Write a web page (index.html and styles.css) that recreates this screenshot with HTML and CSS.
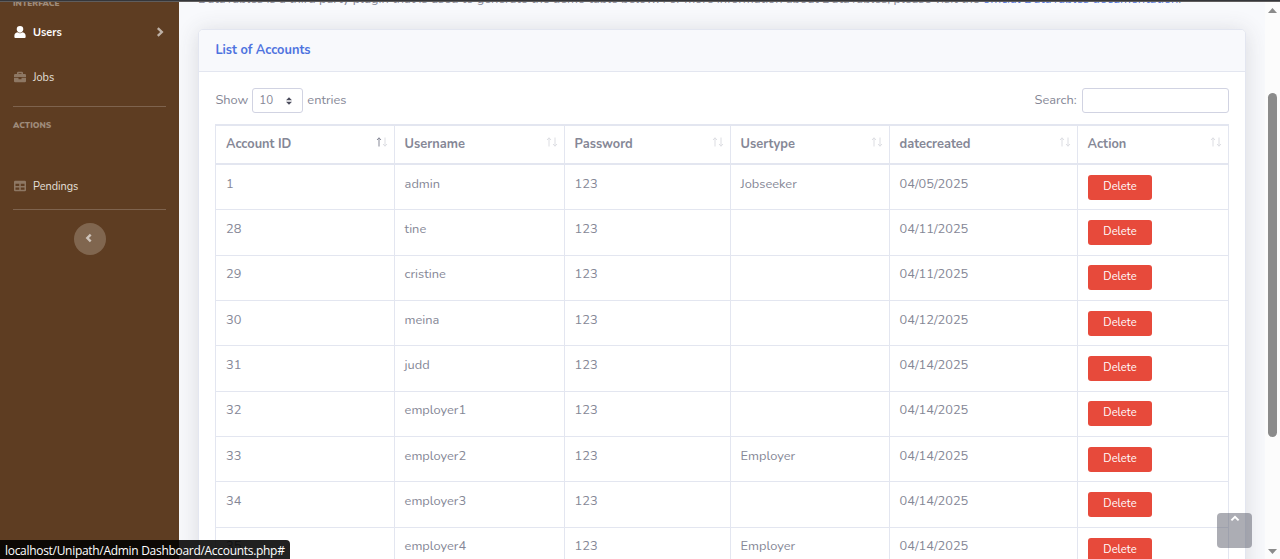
FILE: index.html
```html
<!DOCTYPE html>
<html lang="en">
<head>
<meta charset="utf-8">
<title>Accounts</title>
<link rel="stylesheet" href="styles.css">
</head>
<body>
<div class="window">
  <nav class="sidebar">
    <div class="heading heading-first">Interface</div>
    <a class="nav-item active">
      <svg class="icon" viewBox="0 0 512 512"><path d="M256 0a140 140 0 0 1 140 140c0 60-60 150-140 150S116 200 116 140A140 140 0 0 1 256 0zM150 270c60 55 152 55 212 0 90 10 134 70 134 160v40q0 42-42 42H58q-42 0-42-42v-40c0-90 44-150 134-160z"/></svg>
      <span>Users</span>
      <svg class="chevron" viewBox="0 0 8 10"><path d="M1.8 1.2L5.8 5L1.8 8.8"/></svg>
    </a>
    <a class="nav-item jobs">
      <svg class="icon" viewBox="0 0 512 512"><path d="M320 336q0 16-16 16h-96q-16 0-16-16v-48H0v144q0 48 48 48h416q48 0 48-48V288H320zM464 128h-80V80q0-48-48-48H176q-48 0-48 48v48H48q-48 0-48 48v80h512v-80q0-48-48-48zm-144 0H192V96h128z"/></svg>
      <span>Jobs</span>
    </a>
    <hr class="divider">
    <div class="heading">Actions</div>
    <a class="nav-item pendings">
      <svg class="icon" viewBox="0 0 512 512"><path fill-rule="evenodd" d="M464 32H48Q0 32 0 80v352q0 48 48 48h416q48 0 48-48V80q0-48-48-48zM224 416H64v-96h160zm0-160H64v-96h160zm224 160H288v-96h160zm0-160H288v-96h160z"/></svg>
      <span>Pendings</span>
    </a>
    <hr class="divider last">
    <button class="toggle"><svg viewBox="0 0 8 10"><path d="M5.7 1.6L2.3 5L5.7 8.4"/></svg></button>
  </nav>

  <main class="content">
    <p class="intro">DataTables is a third party plugin that is used to generate the demo table below. For more information about DataTables, please visit the <a>official DataTables documentation</a>.</p>
    <section class="card">
      <h6 class="card-title"><span>List of Accounts</span></h6>
      <div class="card-body">
        <div class="controls">
          <label class="length"><span>Show</span>
            <span class="select"><span>10</span><svg viewBox="0 0 4 5"><path d="M2 0L0 2h4zM2 5L0 3h4z"/></svg></span>
            <span>entries</span></label>
          <label class="search"><span>Search:</span><input type="text"></label>
        </div>
        <div class="table">
          <div class="row head">
            <div><span>Account ID</span><i class="sort asc"><svg viewBox="0 0 12 10"><path d="M3 9.5V.8M1 3L3 .8L5 3"/><path d="M9 .5v8.7M7 7l2 2.2L11 7"/></svg></i></div>
            <div><span>Username</span><i class="sort"><svg viewBox="0 0 12 10"><path d="M3 9.5V.8M1 3L3 .8L5 3"/><path d="M9 .5v8.7M7 7l2 2.2L11 7"/></svg></i></div>
            <div><span>Password</span><i class="sort"><svg viewBox="0 0 12 10"><path d="M3 9.5V.8M1 3L3 .8L5 3"/><path d="M9 .5v8.7M7 7l2 2.2L11 7"/></svg></i></div>
            <div><span>Usertype</span><i class="sort"><svg viewBox="0 0 12 10"><path d="M3 9.5V.8M1 3L3 .8L5 3"/><path d="M9 .5v8.7M7 7l2 2.2L11 7"/></svg></i></div>
            <div><span>datecreated</span><i class="sort"><svg viewBox="0 0 12 10"><path d="M3 9.5V.8M1 3L3 .8L5 3"/><path d="M9 .5v8.7M7 7l2 2.2L11 7"/></svg></i></div>
            <div><span>Action</span><i class="sort"><svg viewBox="0 0 12 10"><path d="M3 9.5V.8M1 3L3 .8L5 3"/><path d="M9 .5v8.7M7 7l2 2.2L11 7"/></svg></i></div>
          </div>
          <div class="row"><div>1</div><div>admin</div><div>123</div><div>Jobseeker</div><div>04/05/2025</div><div><button class="delete">Delete</button></div></div>
          <div class="row"><div>28</div><div>tine</div><div>123</div><div></div><div>04/11/2025</div><div><button class="delete">Delete</button></div></div>
          <div class="row"><div>29</div><div>cristine</div><div>123</div><div></div><div>04/11/2025</div><div><button class="delete">Delete</button></div></div>
          <div class="row"><div>30</div><div>meina</div><div>123</div><div></div><div>04/12/2025</div><div><button class="delete">Delete</button></div></div>
          <div class="row"><div>31</div><div>judd</div><div>123</div><div></div><div>04/14/2025</div><div><button class="delete">Delete</button></div></div>
          <div class="row"><div>32</div><div>employer1</div><div>123</div><div></div><div>04/14/2025</div><div><button class="delete">Delete</button></div></div>
          <div class="row"><div>33</div><div>employer2</div><div>123</div><div>Employer</div><div>04/14/2025</div><div><button class="delete">Delete</button></div></div>
          <div class="row"><div>34</div><div>employer3</div><div>123</div><div></div><div>04/14/2025</div><div><button class="delete">Delete</button></div></div>
          <div class="row"><div>35</div><div>employer4</div><div>123</div><div>Employer</div><div>04/14/2025</div><div><button class="delete">Delete</button></div></div>
        </div>
      </div>
    </section>
  </main>

  <div class="scrollbar">
    <svg class="arrow" viewBox="0 0 9 5"><path d="M4.5 0L9 5H0z"/></svg>
    <div class="thumb"></div>
    <svg class="arrow" viewBox="0 0 9 5"><path d="M0 0h9L4.5 5z"/></svg>
  </div>

  <div class="top-edge"></div>
  <a class="to-top"><svg viewBox="0 0 10 7"><path d="M1.4 5.4L5 1.8l3.6 3.6"/></svg></a>
  <div class="status"><span>localhost/Unipath/Admin Dashboard/Accounts.php#</span></div>
</div>
</body>
</html>
```

FILE: styles.css
```css
* { box-sizing: border-box; }

body {
  margin: 0;
  overflow: hidden;
  font-family: Nunito, Lato, sans-serif;
  font-size: 12.8px;
  color: #858796;
}

.window {
  position: relative;
  display: flex;
  width: 1280px;
  height: 559px;
  overflow: hidden;
  background: #f8f9fc;
}

/* Sidebar */
.sidebar {
  width: 179px;
  flex: none;
  padding: 0 13px;
  background: #5e3d22;
}

.heading {
  height: 12px;
  line-height: 12px;
  font-size: 8.32px;
  font-weight: 900;
  text-transform: uppercase;
  color: #9e8b7a;
}

.heading-first {
  margin-top: -2px;
}

.nav-item {
  display: flex;
  align-items: center;
  height: 20px;
  font-size: 10.9px;
  color: #e6e1dd;
}

.nav-item .icon {
  width: 12px;
  height: 12px;
  margin: 0 7px 0 1px;
  fill: #8e7864;
}

.nav-item.active {
  margin-top: 12px;
  font-weight: 700;
  color: #fff;
}

.nav-item.active .icon { fill: #fff; }
.nav-item.jobs { margin-top: 25px; }
.nav-item.pendings { margin-top: 44px; }

.chevron {
  width: 8px;
  height: 10px;
  margin: 0 2px 0 auto;
  fill: none;
  stroke: #beb1a6;
  stroke-width: 2.4;
}

.divider {
  height: 1px;
  margin: 19px 0 13px;
  border: 0;
  background: #7e634e;
}

.divider.last { margin: 13px 0; }

.toggle {
  display: grid;
  place-items: center;
  width: 32px;
  height: 32px;
  margin-left: 61px;
  padding: 0 2px 2px 0;
  border: 0;
  border-radius: 50%;
  background: #80664f;
}

.toggle svg {
  width: 8px;
  height: 10px;
  fill: none;
  stroke: #cdc3ba;
  stroke-width: 2.4;
}

/* Main column */
.content {
  width: 1086px;
  flex: none;
  padding: 0 19px;
}

.intro {
  height: 16px;
  margin: -9px 0 22px;
  line-height: 16px;
  white-space: nowrap;
}

.intro a { color: #4e73df; }

.card {
  width: 1048px;
  height: 620px;
  border: 1px solid #e3e6f0;
  border-radius: 5px;
  background: #fff;
  box-shadow: 0 2px 22px rgba(58, 59, 69, 0.16);
}

.card-title {
  display: flex;
  align-items: center;
  height: 42px;
  margin: 0;
  padding: 0 16.4px 1px;
  border-bottom: 1px solid #e3e6f0;
  border-radius: 4px 4px 0 0;
  font-size: 12.8px;
  font-weight: 700;
  color: #4e73df;
  background: #f8f9fc;
}

.card-body { padding: 16px 16px 0; }

.controls {
  display: flex;
  justify-content: space-between;
  height: 25px;
  margin-bottom: 11px;
}

.length,
.search {
  display: flex;
  align-items: center;
  gap: 4px;
}

.length { padding-left: 0.4px; }

.length > span:not(.select),
.search > span {
  padding-bottom: 1px;
}

.search { gap: 5.4px; }

.select {
  display: flex;
  align-items: center;
  justify-content: space-between;
  width: 51px;
  height: 25px;
  padding: 0 10px 2px 6px;
  border: 1px solid #d1d3e2;
  border-radius: 3px;
  font-size: 11.6px;
}

.select svg {
  width: 6px;
  height: 8px;
  margin-top: 2px;
  fill: #4b4c5c;
}

.search input {
  width: 147px;
  height: 25px;
  border: 1px solid #d1d3e2;
  border-radius: 3px;
  background: #fff;
}

/* Accounts table */
.table {
  width: 1014px;
  border-left: 1px solid #e3e6f0;
}

.row {
  display: grid;
  grid-template-columns: 179px 170px 166px 159px 188px 151px;
  height: 45.35px;
  border-top: 1px solid #e3e6f0;
}

.row > div {
  padding: 10.6px 9.6px 0;
  border-right: 1px solid #e3e6f0;
  line-height: 16px;
}

.row.head {
  height: 41px;
  border-top-width: 2px;
  border-bottom: 2px solid #e3e6f0;
  font-weight: 700;
}

.row.head > div {
  display: flex;
  justify-content: space-between;
  padding: 10px 6.5px 0 9.6px;
}

.row.head + .row {
  height: 44.333px;
  border-top: 0;
}

.row > div:first-child { padding-left: 10px; }

.sort svg {
  display: block;
  width: 12px;
  height: 10px;
  margin-top: 1px;
  fill: none;
  stroke: #dcdde2;
  stroke-width: 1;
}

.sort.asc path:first-child { stroke: #858796; }

.delete {
  display: block;
  width: 64px;
  height: 25px;
  margin: -0.82px 0 0 0.4px;
  padding: 0 0 2px;
  border: 0;
  border-radius: 3px;
  font: 11.2px Nunito, Lato, sans-serif;
  color: #fff;
  background: #e74a3b;
}

/* Browser chrome */
.scrollbar {
  display: flex;
  flex-direction: column;
  align-items: center;
  width: 15px;
  flex: none;
  padding: 8px 0 5px;
  background: #fcfcfc;
}

.arrow {
  width: 9px;
  height: 5px;
  fill: #8b8b8b;
}

.thumb {
  width: 9px;
  height: 344px;
  margin: 80px 0 112px;
  border-radius: 5px;
  background: #8b8b8b;
}

.top-edge {
  position: absolute;
  inset: 0 0 auto;
  height: 2px;
  border-bottom: 1px solid #5f5d5d;
  background: #35363a;
}

.to-top {
  position: absolute;
  right: 28px;
  bottom: 11px;
  width: 35px;
  height: 35px;
  border-radius: 4px;
  background: rgba(90, 92, 105, 0.5);
}

.to-top svg {
  display: block;
  width: 10px;
  height: 7px;
  margin: 2px 0 0 13px;
  fill: none;
  stroke: #fff;
  stroke-width: 2;
}

.status {
  position: absolute;
  left: 0;
  bottom: 0;
  width: 290px;
  height: 19px;
  padding-left: 5px;
  border-top-right-radius: 4px;
  font: 12px/21px "Open Sans", sans-serif;
  letter-spacing: -0.3px;
  white-space: nowrap;
  color: #fff;
  background: rgba(0, 0, 0, 0.87);
}
```
